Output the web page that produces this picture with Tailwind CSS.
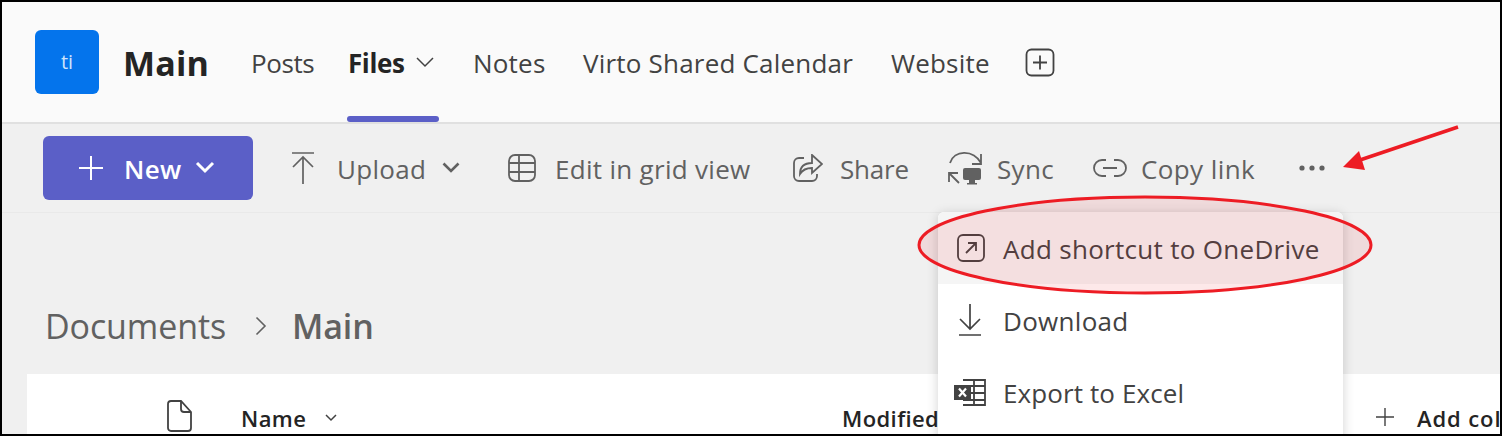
<!DOCTYPE html>
<html lang="en">
<head>
  <meta charset="UTF-8" />
  <title>Main - Files</title>
  <script src="https://cdn.jsdelivr.net/npm/@tailwindcss/browser@4"></script>
</head>
<body class="bg-black">
  <div class="relative w-[1502px] h-[436px] overflow-hidden border-2 border-black bg-[#f0f0f0] font-['Open_Sans',sans-serif] text-[#424242]">

    <!-- team header -->
    <header class="flex items-center h-[120px] pl-[33px] bg-[#fafafa] border-b-2 border-[#e0e0e0] box-content">
      <div class="flex items-center justify-center w-16 h-16 rounded-md bg-[#0474ec] text-[#cfe4fb] text-[20px]">ti</div>
      <h1 class="ml-[24px] w-[128px] pt-[2px] text-[34px] font-bold text-[#242424] tracking-[0.2px]">Main</h1>
      <nav class="flex items-center h-full text-[26px] tracking-[0.2px]">
        <span class="w-[97px] pt-[2px] tracking-[-0.4px]">Posts</span>
        <span class="relative flex items-center w-[125px] h-full pt-[2px] font-bold text-[#242424] tracking-[-0.4px]">
          Files
          <svg class="absolute left-[68px] top-[54px]" width="18" height="12" viewBox="0 0 18 12" fill="none" stroke="#424242" stroke-width="1.5"><path d="M1 2l8 8 8-8"/></svg>
          <span class="absolute left-[-1px] bottom-0 w-[92px] h-[6px] rounded-[3px] bg-[#5b5fc7]"></span>
        </span>
        <span class="w-[110px] pt-[2px]">Notes</span>
        <span class="w-[308px] pt-[2px] whitespace-nowrap">Virto Shared Calendar</span>
        <span class="w-[134px] pt-[2px]">Website</span>
        <svg class="mt-[1px]" width="30" height="30" viewBox="0 0 30 30" fill="none" stroke="#424242" stroke-width="1.8"><rect x="1.5" y="1.5" width="27" height="26" rx="5"/><path d="M15 7.5v14M8 14.5h14"/></svg>
      </nav>
    </header>

    <!-- command bar -->
    <div class="flex items-center h-[89px] pb-px pl-[41px] border-b border-[#e9e9e9] text-[26px] text-[#616161] tracking-[0.3px]">
      <button class="flex items-center w-[210px] h-16 pl-9 rounded-md bg-[#5b5fc7] text-white font-semibold">
        <svg width="24" height="24" viewBox="0 0 24 24" fill="none" stroke="white" stroke-width="2"><path d="M12 0v24M0 12h24"/></svg>
        <span class="ml-[21px] w-[71px] pt-[4px] text-left">New</span>
        <svg width="20" height="13" viewBox="0 0 20 13" fill="none" stroke="white" stroke-width="3"><path d="M2 2l8 8 8-8"/></svg>
      </button>
      <svg class="ml-[38px]" width="24" height="32" viewBox="0 0 24 32" fill="none" stroke="#616161" stroke-width="1.7"><path d="M1 1h22M12 32V5M2 15L12 5l10 10"/></svg>
      <span class="ml-[22px] w-[105px] pt-[4px]">Upload</span>
      <svg width="18" height="12" viewBox="0 0 18 12" fill="none" stroke="#616161" stroke-width="2.6"><path d="M1.5 1.5L9 9l7.5-7.5"/></svg>
      <svg class="ml-[48px]" width="28" height="28" viewBox="0 0 28 28" fill="none" stroke="#616161" stroke-width="1.8"><rect x="1" y="1" width="26" height="26" rx="6"/><path d="M1 9h26M1 18h26M11 1v26"/></svg>
      <span class="ml-[19px] w-[238px] pt-[4px] whitespace-nowrap">Edit in grid view</span>
      <svg width="30" height="28" viewBox="0 0 30 28" fill="none" stroke="#616161" stroke-width="1.8"><path d="M11 4H6a5 5 0 0 0-5 5v13a5 5 0 0 0 5 5h13a5 5 0 0 0 5-5v-2"/><path d="M19 1l10 9-10 9v-5c-5 0-9 1-12 6 0-7 4-11 12-11z"/></svg>
      <span class="ml-[17px] w-[108px] pt-[4px] tracking-[-0.2px]">Share</span>
      <svg width="34" height="34" viewBox="0 0 34 34" fill="none" stroke="#616161" stroke-width="1.8"><path d="M2 12C6 -1 25 -2 33 12M33 3v10H24"/><path d="M1 31V22h9M1 22l10 10"/><path d="M15 19a2 2 0 0 1 2-2h14a2 2 0 0 1 2 2v8a2 2 0 0 1-2 2H17a2 2 0 0 1-2-2z" fill="#616161" stroke="none"/><path d="M21 29h6v3h2v1.500H19V32h2z" fill="#616161" stroke="none"/></svg>
      <span class="ml-[15px] w-[96px] pt-[4px]">Sync</span>
      <svg width="34" height="18" viewBox="0 0 34 18" fill="none" stroke="#616161" stroke-width="1.8"><path d="M13 1H9a8 8 0 0 0 0 16h4M21 1h4a8 8 0 0 1 0 16h-4M10 9h14"/></svg>
      <span class="ml-[14px] w-[158px] pt-[4px] whitespace-nowrap tracking-[0.4px]">Copy link</span>
      <svg width="26" height="6" viewBox="0 0 26 6" fill="#616161"><circle cx="3" cy="3" r="2.6"/><circle cx="13" cy="3" r="2.6"/><circle cx="23" cy="3" r="2.6"/></svg>
    </div>

    <!-- breadcrumb -->
    <div class="flex items-center h-[161px] pt-[65px] pl-[43px] text-[34px] text-[#616161] tracking-[-0.1px]">
      <span class="w-[210px]">Documents</span>
      <svg width="12" height="20" viewBox="0 0 12 20" fill="none" stroke="#616161" stroke-width="1.6"><path d="M1.5 1.5L10 10l-8.5 8.5"/></svg>
      <span class="ml-[25px] font-semibold">Main</span>
    </div>

    <!-- file list header -->
    <div class="flex items-start ml-[25px] h-[60px] pt-[26px] bg-white text-[22px] font-semibold text-[#242424] tracking-[0.4px]">
      <svg class="ml-[140px] shrink-0" width="25" height="32" viewBox="0 0 25 32" fill="none" stroke="#424242" stroke-width="1.8"><path d="M4 1h10l10 11v16a3 3 0 0 1-3 3H4a3 3 0 0 1-3-3V4a3 3 0 0 1 3-3z"/><path d="M14 1v8a3 3 0 0 0 3 3h7"/></svg>
      <span class="ml-[49px] w-[84px] shrink-0 mt-[2px]">Name</span>
      <svg class="mt-[14px] shrink-0" width="12" height="8" viewBox="0 0 12 8" fill="none" stroke="#424242" stroke-width="1.5"><path d="M1 1l5 5 5-5"/></svg>
      <span class="ml-[505px] w-[534px] shrink-0 mt-[2px]">Modified</span>
      <svg class="mt-[8px] shrink-0" width="18" height="18" viewBox="0 0 18 18" fill="none" stroke="#424242" stroke-width="1.4"><path d="M9 0v18M0 9h18"/></svg>
      <span class="ml-[23px] shrink-0 mt-[2px] whitespace-nowrap tracking-[0.9px]">Add column</span>
    </div>

    <!-- overflow menu -->
    <div class="absolute left-[936px] top-[210px] w-[405px] h-[240px] rounded-t-md bg-white shadow-[0_2px_12px_rgba(0,0,0,0.18)] text-[26px] tracking-[0.3px]">
      <div class="flex items-center h-[72px] pl-[18px] bg-[#f5f5f5] rounded-t-md">
        <svg width="30" height="30" viewBox="0 0 30 30" fill="none" stroke="#424242" stroke-width="1.8"><rect x="2" y="2" width="26" height="26" rx="5"/><path d="M10 20L20 10M12 10h8v8"/></svg>
        <span class="ml-[17px] mt-[2px] whitespace-nowrap">Add shortcut to OneDrive</span>
      </div>
      <div class="flex items-center h-[72px] pl-[18px]">
        <svg class="ml-[2px]" width="24" height="32" viewBox="0 0 24 32" fill="none" stroke="#424242" stroke-width="1.7"><path d="M12 0v25M2 15l10 10 10-10M1 31h22"/></svg>
        <span class="ml-[21px] mt-[2px] whitespace-nowrap">Download</span>
      </div>
      <div class="flex items-center h-[72px] pl-[16px] tracking-[0.1px]">
        <svg width="32" height="27" viewBox="0 0 32 27" fill="none" stroke="#424242" stroke-width="1.8"><path d="M9 1h22v25H9M9 7h22M9 14h22M9 21h22M20 1v25"/><rect x="0" y="6" width="17" height="15" fill="#424242" stroke="none"/><path d="M5 9.500l7 8M12 9.500l-7 8" stroke="white" stroke-width="2.200"/></svg>
        <span class="ml-[17px] mt-[2px] whitespace-nowrap">Export to Excel</span>
      </div>
    </div>

    <!-- red annotations -->
    <svg class="absolute left-[-2px] top-[-2px]" width="1502" height="436" viewBox="0 0 1502 436" fill="none">
      <ellipse cx="1145" cy="245" rx="226" ry="48" fill="#ed1c24" fill-opacity="0.1" stroke="#ed1c24" stroke-width="3"/>
      <path d="M1458 127L1360 160" stroke="#ed1c24" stroke-width="3.5"/>
      <path d="M1343 167L1359 151L1365 170Z" fill="#ed1c24"/>
    </svg>
  </div>
</body>
</html>
